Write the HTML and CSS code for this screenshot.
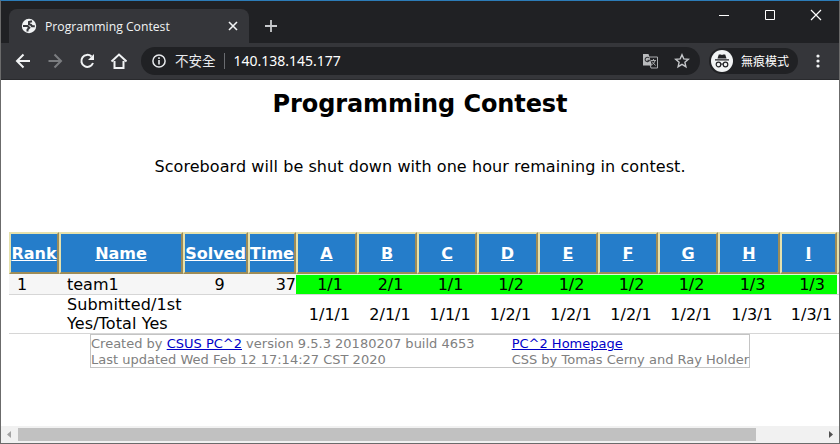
FILE: index.html
```html
<!DOCTYPE html>
<html lang="zh-Hant">
<head>
<meta charset="utf-8">
<title>Programming Contest</title>
<link rel="stylesheet" href="styles.css">
</head>
<body>
<div class="window">
  <header class="tabbar">
    <div class="tab">
      <svg class="globe" width="16" height="16" viewBox="0 0 16 16"><circle cx="8" cy="8" r="7.2" fill="#f1f3f4"/><path d="M2 8h4.500l1.800 1.800-1.800 1.800v2M11 3.200L8 4v2.200l2 .6 1 1.400h2.800" fill="none" stroke="#35363a" stroke-width="2"/></svg>
      <span class="tab-title">Programming Contest</span>
      <svg class="tab-close" width="10" height="10" viewBox="0 0 10 10"><path d="M1 1l8 8M9 1l-8 8" stroke="#f1f3f4" stroke-width="1.6"/></svg>
    </div>
    <svg class="new-tab" width="12" height="12" viewBox="0 0 12 12"><path d="M6 0v12M0 6h12" stroke="#c8cacd" stroke-width="1.8"/></svg>
    <svg class="window-controls" width="104" height="12" viewBox="0 0 104 12" fill="none" stroke="#fff"><path d="M0 6.500h10" stroke-width="1"/><path d="M46.500 1.500h9v9h-9z"/><path d="M92 1l10 10M102 1L92 11" stroke-width="1.200"/></svg>
  </header>
  <nav class="toolbar">
    <svg class="nav-icons" width="112" height="18" viewBox="0 0 112 18" fill="none" stroke="#f1f3f4" stroke-width="2"><path d="M15 9H2.500M8.500 2.500L2 9 8.500 15.500"/><path d="M33.500 9H46M39.500 2.500L46 9 39.500 15.500" stroke="#7b7d80"/><path d="M76.500 4.500A6 6 0 1 0 78 11"/><path d="M79 2v6h-6z" fill="#f1f3f4" stroke="none"/><path d="M99.500 9v7h9V9M96.500 9.500L104 2.500l7.500 7" /></svg>
    <div class="address">
      <svg width="14" height="14" viewBox="0 0 14 14"><circle cx="7" cy="7" r="6.100" fill="none" stroke="#e8eaed" stroke-width="1.500"/><path d="M7 6v4.500M7 3.300v1.600" stroke="#e8eaed" stroke-width="1.600"/></svg>
      <span class="insecure">不安全</span>
      <span class="divider"></span>
      <span class="url">140.138.145.177</span>
      <svg class="translate" width="15" height="15" viewBox="0 0 15 15"><path d="M5 3h9.500v11H8z" fill="none" stroke="#aaacae"/><path d="M0 0h5.500l3.500 11.500H0z" fill="#b9bbbd"/><path d="M6 4a2.200 2.200 0 1 0 .4 2.200H4.300" fill="none" stroke="#35363a" stroke-width="1.100"/><path d="M8 6.500h5M10.500 5v1.500M12 6.500c-.5 2.500-2 3.500-3 4M9 7.500l3.500 4" fill="none" stroke="#aaacae"/></svg>
      <svg class="star" width="16" height="16" viewBox="0 0 16 16"><path d="M8 1.800l1.800 4.100 4.500.4-3.400 3 1 4.400L8 11.400l-3.900 2.300 1-4.400-3.400-3 4.500-.4z" fill="none" stroke="#c5c7ca" stroke-width="1.400"/></svg>
    </div>
    <div class="incognito">
      <svg width="22" height="22" viewBox="0 0 22 22"><circle cx="11" cy="11" r="11" fill="#f1f3f4"/><path d="M6.500 8.500L7.800 4.500h2L11 5l1.200-.5h2l1.300 4zM4 9.200h14v1.300H4z" fill="#202124"/><path d="M9.800 14.300q1.200-.8 2.400 0" fill="none" stroke="#202124"/><circle cx="7.500" cy="14.500" r="2.300" fill="none" stroke="#202124" stroke-width="1.200"/><circle cx="14.500" cy="14.500" r="2.300" fill="none" stroke="#202124" stroke-width="1.200"/></svg>
      <span>無痕模式</span>
    </div>
    <svg class="menu" width="4" height="14" viewBox="0 0 4 14" fill="#f1f3f4"><circle cx="2" cy="2" r="1.600"/><circle cx="2" cy="7" r="1.600"/><circle cx="2" cy="12" r="1.600"/></svg>
  </nav>
  <main class="page">
    <h1>Programming Contest</h1>
    <p class="notice">Scoreboard will be shut down with one hour remaining in contest.</p>
    <div class="scoreboard">
      <div class="row head">
        <b>Rank</b><b>Name</b><b>Solved</b><b>Time</b><b>A</b><b>B</b><b>C</b><b>D</b><b>E</b><b>F</b><b>G</b><b>H</b><b>I</b><b></b>
      </div>
      <div class="row team">
        <span class="rank">1</span><span class="name">team1</span><span class="solved">9</span><span class="time">37</span><span class="yes">1/1</span><span class="yes">2/1</span><span class="yes">1/1</span><span class="yes">1/2</span><span class="yes">1/2</span><span class="yes">1/2</span><span class="yes">1/2</span><span class="yes">1/3</span><span class="yes">1/3</span><span></span>
      </div>
      <div class="row totals">
        <span></span><span class="name">Submitted/1st<br>Yes/Total Yes</span><span></span><span></span><span>1/1/1</span><span>2/1/1</span><span>1/1/1</span><span>1/2/1</span><span>1/2/1</span><span>1/2/1</span><span>1/2/1</span><span>1/3/1</span><span>1/3/1</span><span></span>
      </div>
    </div>
    <footer class="credits">
      <div class="created">Created by <a>CSUS PC^2</a> version 9.5.3 20180207 build 4653<br>Last updated Wed Feb 12 17:14:27 CST 2020</div>
      <div class="links"><a>PC^2 Homepage</a><br>CSS by Tomas Cerny and Ray Holder</div>
    </footer>
  </main>
  <div class="scrollbar">
    <svg width="17" height="17" viewBox="0 0 17 17"><path d="M10 5v7L6 8.500z" fill="#a3a3a3"/></svg>
    <div class="track"><div class="thumb"></div></div>
    <svg width="17" height="17" viewBox="0 0 17 17"><path d="M7 5v7l4-3.500z" fill="#505050"/></svg>
  </div>
</div>
</body>
</html>
```
FILE: styles.css
```css
* { box-sizing: border-box; }
body { margin: 0; overflow: hidden; }
.window {
  width: 840px; height: 444px; overflow: hidden;
  display: flex; flex-direction: column;
  border: 1px solid #6b6b6b; border-top-color: #2c7cb8;
  background: #fff;
}
.tabbar {
  flex: 0 0 42px; display: flex; align-items: flex-start;
  background: #202124; padding: 8px 16px 0 8px;
}
.tab {
  width: 240px; height: 34px; border-radius: 8px 8px 0 0; background: #35363a;
  display: flex; align-items: center; padding: 0 11px 0 12px;
}
.tab-title { margin: 2px 0 0 8px; flex: 1; font: 12.2px/16px "Open Sans", sans-serif; color: #f1f3f4; white-space: nowrap; }
.new-tab { margin: 11px 0 0 16px; }
.window-controls { margin: 0 0 0 auto; }
.toolbar {
  flex: 0 0 37px; display: flex; align-items: center;
  background: #35363a; border-bottom: 1px solid #292a2d; padding-left: 14px;
}
.nav-icons { flex: none; }
.address {
  margin-left: 14px; width: 559px; height: 28px; border-radius: 14px; background: #202124;
  display: flex; align-items: center; padding: 0 10px 0 11px; color: #e8eaed;
}
.insecure { margin: -2px 0 0 9px; font: 13.5px/20px "Noto Sans CJK TC", sans-serif; }
.divider { width: 1px; height: 16px; margin: 0 9px 0 8px; background: #6a6c70; }
.url { flex: 1; font: 14px/20px "Noto Sans", sans-serif; color: #fff; }
.translate { margin-right: 16px; }
.incognito {
  margin-left: 9px; width: 89px; height: 26px; border-radius: 13px; background: #202124;
  display: flex; align-items: center; padding-left: 2px;
  font: 12px/18px "Noto Sans CJK TC", sans-serif; color: #fff;
}
.incognito span { margin-left: 8px; white-space: nowrap; }
.menu { margin-left: 18px; }

.page {
  flex: 1; min-height: 0; overflow: hidden;
  font: 16px/19px "DejaVu Sans", Verdana, sans-serif; color: #000;
}
h1 { margin: 10px 0 0; font-size: 24px; line-height: 29px; letter-spacing: -0.1px; text-align: center; white-space: nowrap; }
.notice { margin: 38px 0 0; text-align: center; white-space: nowrap; line-height: 20px; letter-spacing: 0.07px; }
.scoreboard { margin: 55px 0 0 8px; width: 890px; }
.row { display: grid; grid-template-columns: 50px 124px 65px 48px 61px 60px 60px 61px 60px 60px 60px 62px 57px 62px; }
.head { height: 42px; }
.head b {
  display: flex; align-items: center; justify-content: center;
  background: #257dca; color: #fff; text-decoration: underline;
  border: 2px solid; border-color: #e5e1ad #9d8c58 #9d8c58 #e5e1ad;
  overflow: hidden;
}
.team { height: 21px; line-height: 22px; background: #f6f6f6; border-bottom: 1px solid #d6d6d6; }
.team span { text-align: center; height: 20px; }
.team .yes { background: #0f0; border-top: 1px solid #d9ffd9; line-height: 20px; padding-left: 7px; }
.row .name { text-align: left; padding-left: 8px; }
.team .rank { text-align: left; padding-left: 8px; }
.team .solved { padding-left: 8px; }
.team .time { text-align: right; }
.totals { height: 39px; align-items: center; border-bottom: 1px solid #d6d6d6; }
.totals .name { letter-spacing: 0.1px; }
.totals span { text-align: center; padding-left: 6px; white-space: nowrap; }
.credits {
  margin-left: 89px; width: 660px; height: 34px; border: 1px solid #c4c4c4; padding-top: 1px;
  display: flex; font-size: 13px; line-height: 16px; color: #808080; white-space: nowrap;
}
.credits a { color: #0000c8; text-decoration: underline; }
.created { width: 421px; }
.scrollbar { flex: 0 0 17px; display: flex; background: #f1f1f1; }
.track { flex: 1; padding-top: 2px; }
.thumb { width: 738px; height: 13px; background: #c1c1c1; }
```
